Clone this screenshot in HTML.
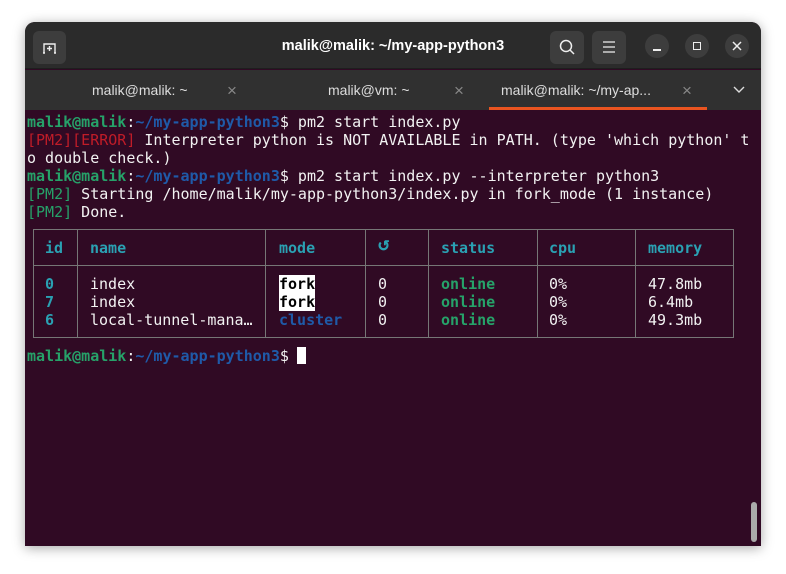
<!DOCTYPE html>
<html><head><meta charset="utf-8"><style>
*{margin:0;padding:0;box-sizing:border-box}
body{width:786px;height:574px;background:#fff;position:relative;overflow:hidden;font-family:"Liberation Sans",sans-serif}
.win{position:absolute;left:25px;top:22px;width:736px;height:524px;border-radius:10px 10px 0 0;overflow:hidden;background:#300a24;box-shadow:0 2px 12px rgba(0,0,0,.35)}
.hdr{position:absolute;left:0;top:0;width:736px;height:47px;background:#2b2b2b;border-bottom:1px solid #1e1e1e}
.tabs{position:absolute;left:0;top:48px;width:736px;height:40px;background:#303030}
.btn{position:absolute;background:#3d3d3d;border-radius:6px}
.circ{position:absolute;width:24px;height:24px;border-radius:50%;background:#3d3d3d;top:12px}
.title{position:absolute;left:0;width:736px;top:16px;text-align:center;color:#fff;font-weight:bold;font-size:14.5px}
.tab{position:absolute;top:60px;color:#ddd;font-size:14px}
.x{position:absolute;top:59px;color:#888;font-size:17px}
.t{position:absolute;left:2px;font-family:"DejaVu Sans Mono",monospace;font-size:15px;white-space:pre;color:#f2f2f2;line-height:18px}
.g{color:#26a269;font-weight:bold}.b{color:#1f5aa8;font-weight:bold}.r{color:#c01c28}.gn{color:#26a269}
.c{color:#2aa1b3;font-weight:bold}
.wh{background:#fff;color:#000;font-weight:bold}
.bl{position:absolute;background:#767676}
</style></head><body>
<div class="win">
<div class="hdr"></div>
<div class="btn" style="left:8px;top:9px;width:33px;height:33px"></div>
<svg style="position:absolute;left:16px;top:17px" width="18" height="18" viewBox="0 0 18 18"><path d="M3 14V5h11v9M2 14h2M13 14h2M8.5 7v5M6 9.5h5" stroke="#eee" stroke-width="1.4" fill="none"/></svg>
<div class="title">malik@malik: ~/my-app-python3</div>
<div class="btn" style="left:525px;top:9px;width:34px;height:33px"></div>
<svg style="position:absolute;left:533px;top:16px" width="18" height="18"><circle cx="8" cy="8" r="5.5" stroke="#eee" stroke-width="1.5" fill="none"/><path d="M12 12l4 4" stroke="#eee" stroke-width="1.5"/></svg>
<div class="btn" style="left:567px;top:9px;width:34px;height:33px"></div>
<svg style="position:absolute;left:577px;top:18px" width="14" height="14"><path d="M1 2h12M1 7h12M1 12h12" stroke="#eee" stroke-width="1.3"/></svg>
<div class="circ" style="left:620px"></div><div style="position:absolute;left:628px;top:27px;width:8px;height:1.5px;background:#eee"></div>
<div class="circ" style="left:660px"></div><div style="position:absolute;left:668px;top:20px;width:8px;height:8px;border:1.5px solid #eee"></div>
<div class="circ" style="left:700px"></div>
<svg style="position:absolute;left:707px;top:19px" width="10" height="10"><path d="M1 1l8 8M9 1l-8 8" stroke="#eee" stroke-width="1.5"/></svg>
<div class="tabs"></div>
<div class="tab" style="left:67px">malik@malik: ~</div><div class="x" style="left:202px">×</div>
<div class="tab" style="left:303px">malik@vm: ~</div><div class="x" style="left:429px">×</div>
<div class="tab" style="left:476px">malik@malik: ~/my-ap...</div><div class="x" style="left:657px">×</div>
<div style="position:absolute;left:464px;top:85px;width:218px;height:3px;background:#e95420"></div>
<svg style="position:absolute;left:707px;top:63px" width="14" height="10"><path d="M2 2l5 5 5-5" stroke="#ddd" stroke-width="1.4" fill="none"/></svg>
<div style="position:absolute;left:726px;top:480px;width:6px;height:40px;border-radius:3px;background:#aaa"></div>
</div>
<div class="t" style="left:27px;top:113px"><span class="g">malik@malik</span>:<span class="b">~/my-app-python3</span>$ pm2 start index.py
<span class="r">[PM2][ERROR]</span> Interpreter python is NOT AVAILABLE in PATH. (type 'which python' t
o double check.)
<span class="g">malik@malik</span>:<span class="b">~/my-app-python3</span>$ pm2 start index.py --interpreter python3
<span class="gn">[PM2]</span> Starting /home/malik/my-app-python3/index.py in fork_mode (1 instance)
<span class="gn">[PM2]</span> Done.</div>
<div class="bl" style="left:33px;top:229px;width:701px;height:1px"></div>
<div class="bl" style="left:33px;top:265px;width:701px;height:1px"></div>
<div class="bl" style="left:33px;top:337px;width:701px;height:1px"></div>
<div class="bl" style="left:33px;top:229px;width:1px;height:109px"></div>
<div class="bl" style="left:77px;top:229px;width:1px;height:109px"></div>
<div class="bl" style="left:265px;top:229px;width:1px;height:109px"></div>
<div class="bl" style="left:365px;top:229px;width:1px;height:109px"></div>
<div class="bl" style="left:428px;top:229px;width:1px;height:109px"></div>
<div class="bl" style="left:537px;top:229px;width:1px;height:109px"></div>
<div class="bl" style="left:635px;top:229px;width:1px;height:109px"></div>
<div class="bl" style="left:733px;top:229px;width:1px;height:109px"></div>
<div class="t c" style="left:45px;top:239px">id</div>
<div class="t c" style="left:90px;top:239px">name</div>
<div class="t c" style="left:279px;top:239px">mode</div>
<div class="t c" style="left:378px;top:235px;font-size:19px">↺</div>
<div class="t c" style="left:441px;top:239px">status</div>
<div class="t c" style="left:549px;top:239px">cpu</div>
<div class="t c" style="left:648px;top:239px">memory</div>
<div class="t" style="left:45px;top:275px"><span class="c">0</span>
<span class="c">7</span>
<span class="c">6</span></div>
<div class="t" style="left:90px;top:275px">index
index
local-tunnel-mana…</div>
<div class="t" style="left:279px;top:275px"><span class="wh">fork</span>
<span class="wh">fork</span>
<span class="b">cluster</span></div>
<div class="t" style="left:378px;top:275px">0
0
0</div>
<div class="t g" style="left:441px;top:275px">online
online
online</div>
<div class="t" style="left:549px;top:275px">0%
0%
0%</div>
<div class="t" style="left:648px;top:275px">47.8mb
6.4mb
49.3mb</div>
<div class="t" style="left:27px;top:347px"><span class="g">malik@malik</span>:<span class="b">~/my-app-python3</span>$ </div>
<div style="position:absolute;left:297px;top:347px;width:9px;height:17px;background:#fff"></div>
</body></html>
